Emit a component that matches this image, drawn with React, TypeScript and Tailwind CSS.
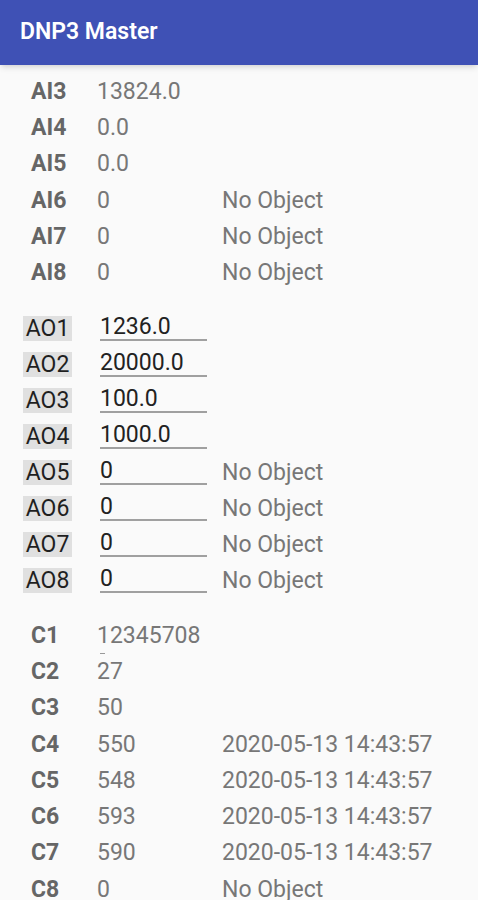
const aiRows = [
  { id: 'AI3', value: '13824.0', note: '' },
  { id: 'AI4', value: '0.0', note: '' },
  { id: 'AI5', value: '0.0', note: '' },
  { id: 'AI6', value: '0', note: 'No Object' },
  { id: 'AI7', value: '0', note: 'No Object' },
  { id: 'AI8', value: '0', note: 'No Object' },
];

const aoRows = [
  { id: 'AO1', value: '1236.0', note: '' },
  { id: 'AO2', value: '20000.0', note: '' },
  { id: 'AO3', value: '100.0', note: '' },
  { id: 'AO4', value: '1000.0', note: '' },
  { id: 'AO5', value: '0', note: 'No Object' },
  { id: 'AO6', value: '0', note: 'No Object' },
  { id: 'AO7', value: '0', note: 'No Object' },
  { id: 'AO8', value: '0', note: 'No Object' },
];

const stamp = '2020-05-13 14:43:57';

const cRows = [
  { id: 'C1', value: '12345708', note: '' },
  { id: 'C2', value: '27', note: '' },
  { id: 'C3', value: '50', note: '' },
  { id: 'C4', value: '550', note: stamp },
  { id: 'C5', value: '548', note: stamp },
  { id: 'C6', value: '593', note: stamp },
  { id: 'C7', value: '590', note: stamp },
  { id: 'C8', value: '0', note: 'No Object' },
];

const ReadRow = ({ id, value, note }: { id: string; value: string; note: string }) => (
  <div className="flex h-[36.3px] items-center text-[23px]">
    <div className="w-[97px] pl-[31px] font-bold text-[#666666]">{id}</div>
    <div className="w-[125px] text-[#777777]">{value}</div>
    <div className="whitespace-nowrap text-[#777777]">{note}</div>
  </div>
);

const App = () => {
  return (
    <div className="min-h-[900px] bg-[#fafafa] font-['Roboto',sans-serif]">
      <div className="flex h-[65px] items-center bg-[#3f51b5] px-5 shadow-md">
        <h1 className="text-[23px] font-semibold text-white">DNP3 Master</h1>
      </div>

      <div className="flex flex-col pt-[9px]">
        {aiRows.map((r) => (
          <ReadRow key={r.id} {...r} />
        ))}
      </div>

      <div className="flex flex-col pt-[19px]">
        {aoRows.map((r) => (
          <div key={r.id} className="flex h-9 items-center text-[23px]">
            <div className="ml-[23px] flex h-[25px] w-[49px] items-center justify-center bg-[#e0e0e0] text-[#1f1f1f]">
              {r.id}
            </div>
            <div className="ml-[28px] h-[24px] w-[107px] border-b-2 border-[#a0a0a0] leading-[20px] text-[#222222]">
              {r.value}
            </div>
            <div className="ml-[15px] whitespace-nowrap text-[#777777]">{r.note}</div>
          </div>
        ))}
      </div>

      <div className="flex flex-col pt-[19px]">
        {cRows.map((r) => (
          <div key={r.id} className="relative">
            <ReadRow {...r} />
            {r.id === 'C1' && (
              <span className="absolute left-[100px] top-[35px] h-[1px] w-[5px] bg-[#999999]" />
            )}
          </div>
        ))}
      </div>
    </div>
  );
};

export default App;
